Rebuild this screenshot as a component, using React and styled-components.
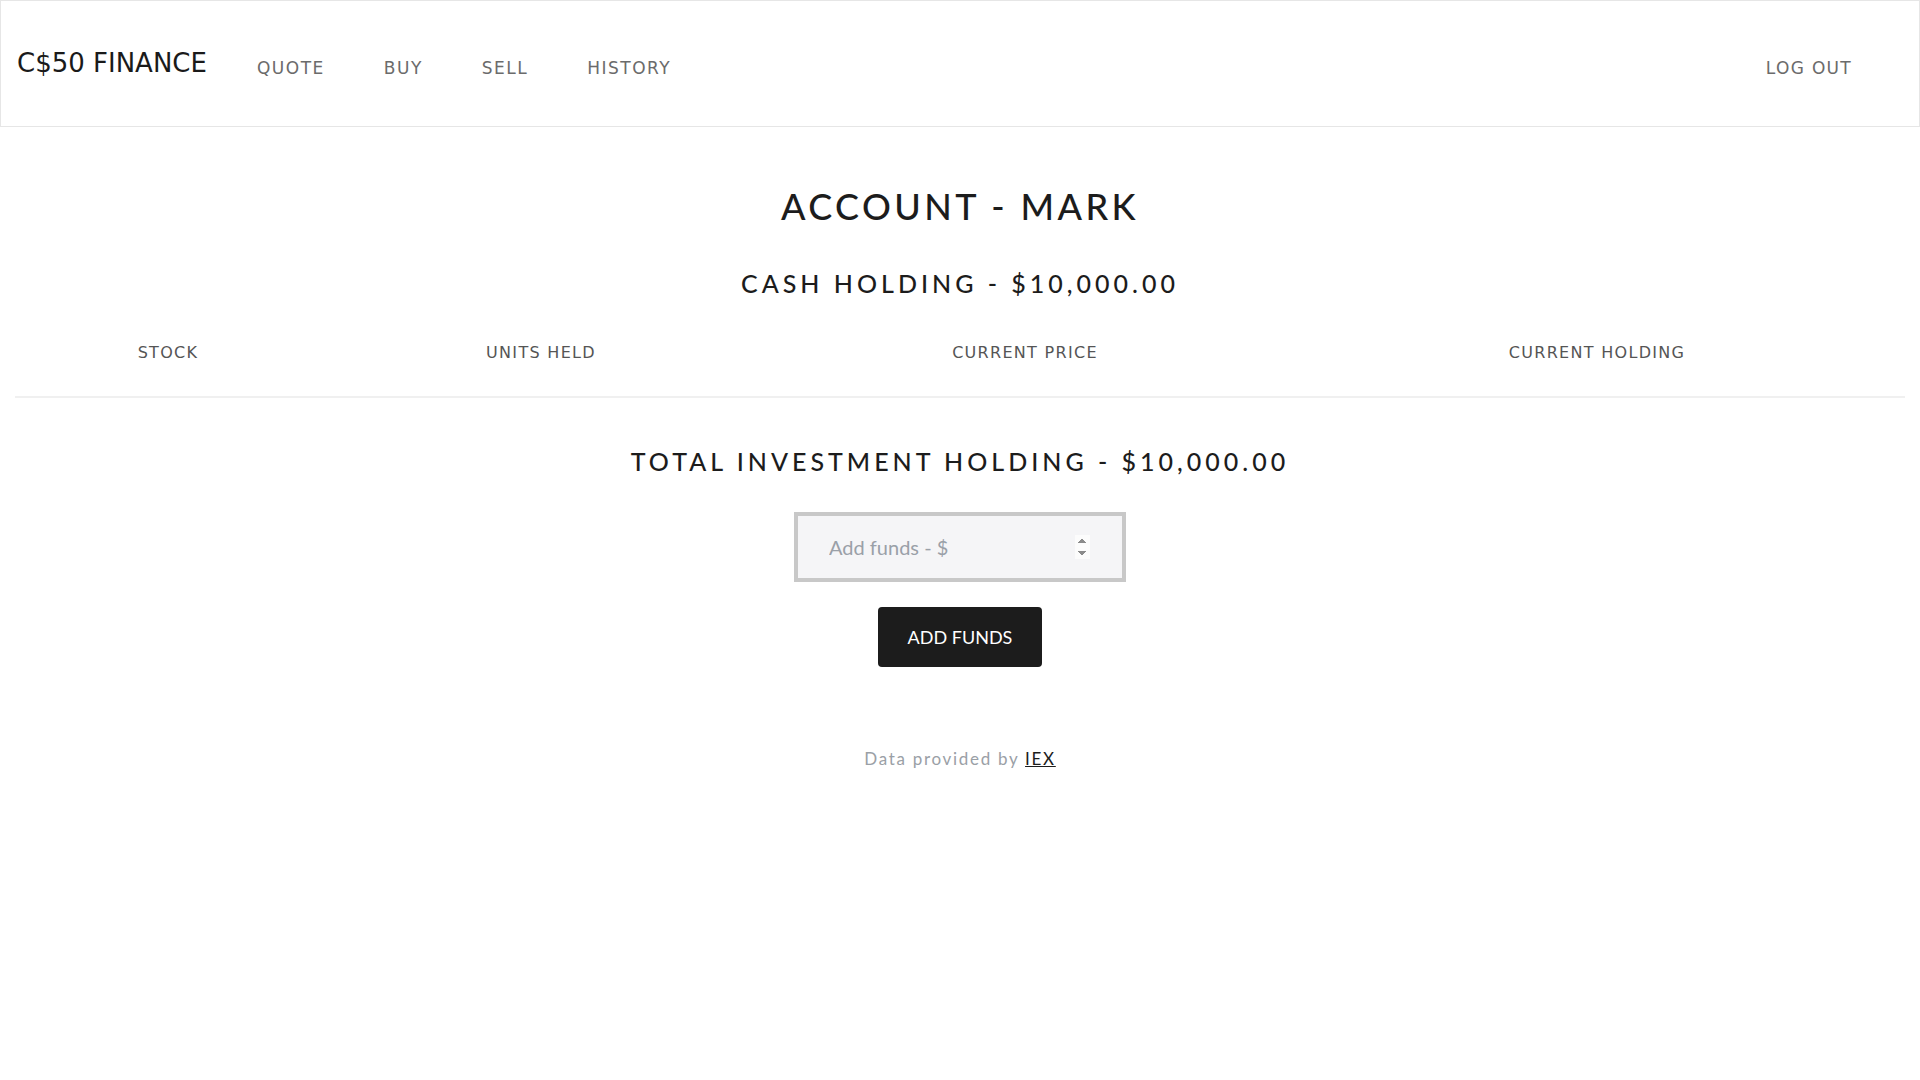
import React from 'react'
import styled, {createGlobalStyle} from 'styled-components'

const GlobalStyle = createGlobalStyle`
  html, body {
    margin: 0;
    padding: 0;
    background: #ffffff;
  }
  body {
    font-family: Lato, "Open Sans", sans-serif;
    color: #1c1c1c;
  }
`

const Navbar = styled.nav`
  display: flex;
  align-items: center;
  height: 125px;
  border: 1px solid #e6e6e6;
  padding: 0 16px;
`

const Brand = styled.a`
  font-family: "DejaVu Sans", sans-serif;
  font-size: 26px;
  color: #1a1a1a;
  text-decoration: none;
  margin-right: 50px;
  margin-top: -1px;
`

const NavList = styled.ul`
  display: flex;
  gap: 59px;
  list-style: none;
  margin: 8px 0 0;
  padding: 0;
  flex: 1;
`

const NavLink = styled.a`
  font-family: "DejaVu Sans", sans-serif;
  font-size: 17px;
  letter-spacing: 1.5px;
  color: #6b6b6b;
  text-decoration: none;
`

const LogOut = styled(NavLink)`
  margin: 8px 51px 0 0;
  letter-spacing: 1.3px;
`

const Main = styled.main`
  display: flex;
  flex-direction: column;
  align-items: center;
  padding: 0 15px;
`

const Title = styled.h1`
  font-size: 36px;
  font-weight: 500;
  letter-spacing: 3.4px;
  margin: 58px 0 0;
  line-height: 1.2;
`

const SubTitle = styled.h2`
  font-size: 25px;
  font-weight: 500;
  letter-spacing: 4px;
  margin: ${p => p.$top}px 0 0;
  line-height: 1.2;
`

const Table = styled.div`
  width: 100%;
  margin-top: 11px;
`

const HeadRow = styled.div`
  display: grid;
  grid-template-columns: 306px 440px 528px 616px;
  align-items: center;
  height: 87px;
  border-bottom: 2px solid #f0f0f0;
`

const HeadCell = styled.div`
  font-family: "DejaVu Sans", sans-serif;
  font-size: 16px;
  letter-spacing: 1.3px;
  color: #555555;
  text-align: center;
`

const Form = styled.form`
  display: flex;
  flex-direction: column;
  align-items: center;
  gap: 25px;
  margin-top: 36px;
`

const Input = styled.input`
  box-sizing: border-box;
  width: 332px;
  height: 70px;
  border: 4px solid #c8c8c8;
  background: #f5f5f7;
  padding: 0 32px 0 31px;
  font-family: inherit;
  font-size: 20px;
  color: #333;
  outline: none;
  &::placeholder {
    color: #9aa0a8;
  }
`

const Button = styled.button`
  width: 164px;
  height: 60px;
  border: none;
  border-radius: 4px;
  background: #1c1c1c;
  color: #ffffff;
  font-family: inherit;
  font-size: 18px;
  cursor: pointer;
`

const Footer = styled.footer`
  margin-top: 81px;
  font-size: 17px;
  letter-spacing: 1.7px;
  color: #9aa0a6;
  text-align: center;
  a {
    color: #1c1c1c;
    text-decoration: underline;
  }
`

const columns = ['STOCK', 'UNITS HELD', 'CURRENT PRICE', 'CURRENT HOLDING']

export default function App() {
    return (
        <>
            <GlobalStyle/>
            <Navbar>
                <Brand href="#">C$50 FINANCE</Brand>
                <NavList>
                    <li><NavLink href="#">QUOTE</NavLink></li>
                    <li><NavLink href="#">BUY</NavLink></li>
                    <li><NavLink href="#">SELL</NavLink></li>
                    <li><NavLink href="#">HISTORY</NavLink></li>
                </NavList>
                <LogOut href="#">LOG OUT</LogOut>
            </Navbar>
            <Main>
                <Title>ACCOUNT - MARK</Title>
                <SubTitle $top={40}>CASH HOLDING - $10,000.00</SubTitle>
                <Table>
                    <HeadRow>
                        {columns.map(c => <HeadCell key={c}>{c}</HeadCell>)}
                    </HeadRow>
                </Table>
                <SubTitle $top={48}>TOTAL INVESTMENT HOLDING - $10,000.00</SubTitle>
                <Form onSubmit={e => e.preventDefault()}>
                    <Input type="number" placeholder="Add funds - $" autoFocus/>
                    <Button type="submit">ADD FUNDS</Button>
                </Form>
                <Footer>
                    Data provided by <a href="#">IEX</a>
                </Footer>
            </Main>
        </>
    )
}
